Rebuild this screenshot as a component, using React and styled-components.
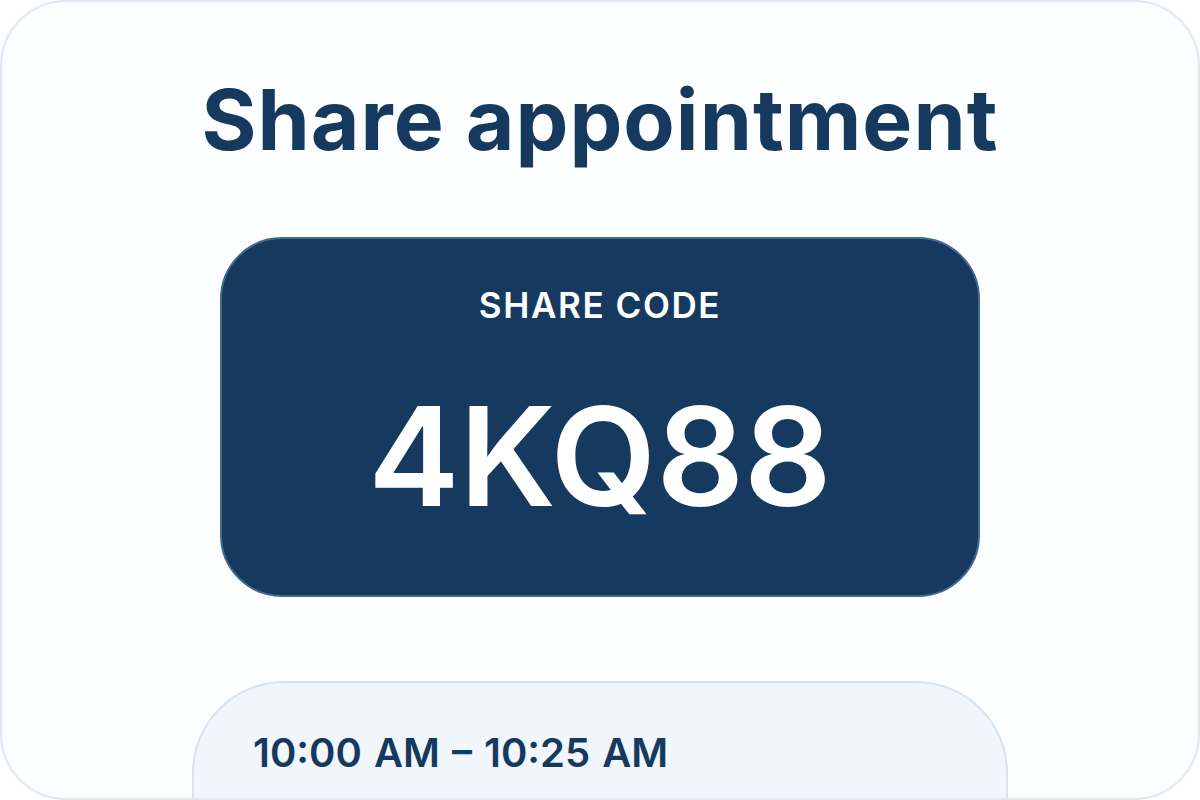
import React from "react";
import styled, {createGlobalStyle} from "styled-components";

const GlobalStyle = createGlobalStyle`
  html, body {
    margin: 0;
    padding: 0;
    background: #ffffff;
  }
  body {
    font-family: Inter, "Noto Sans", "Liberation Sans", sans-serif;
  }
`;

const Card = styled.div`
  box-sizing: border-box;
  width: 1200px;
  height: 800px;
  border: 2px solid #e3e7f4;
  border-radius: 66px;
  background: #fdfeff;
  overflow: hidden;
  display: flex;
  flex-direction: column;
  align-items: center;
  padding-top: 76px;

  & > * {
    flex-shrink: 0;
  }
`;

const Title = styled.h1`
  margin: 0;
  font-size: 84px;
  line-height: 1;
  font-weight: 700;
  color: #163a5f;
  letter-spacing: 1px;
`;

const CodeBox = styled.div`
  box-sizing: border-box;
  width: 760px;
  height: 360px;
  margin-top: 75px;
  border: 2px solid #44668f;
  border-radius: 62px;
  background: #163a5f;
  display: flex;
  flex-direction: column;
  align-items: center;
  padding-top: 49px;
`;

const CodeLabel = styled.div`
  font-size: 35px;
  line-height: 1;
  font-weight: 600;
  color: #ffffff;
  letter-spacing: 1.6px;
`;

const Code = styled.div`
  margin-top: 65px;
  font-size: 137px;
  line-height: 1;
  font-weight: 600;
  color: #ffffff;
  letter-spacing: 0;
`;

const TimeCard = styled.div`
  box-sizing: border-box;
  width: 816px;
  height: 240px;
  margin-top: 84px;
  border: 2px solid #d9e2f0;
  border-radius: 92px;
  background: #f1f6fc;
  padding: 50px 0 0 59px;
`;

const Time = styled.div`
  font-size: 40px;
  line-height: 1;
  font-weight: 600;
  color: #163a5f;
  word-spacing: 2px;
`;

export default function App() {
  return (
    <>
      <GlobalStyle />
      <Card>
        <Title>Share appointment</Title>
        <CodeBox>
          <CodeLabel>SHARE CODE</CodeLabel>
          <Code>4KQ88</Code>
        </CodeBox>
        <TimeCard>
          <Time>10:00 AM – 10:25 AM</Time>
        </TimeCard>
      </Card>
    </>
  );
}
